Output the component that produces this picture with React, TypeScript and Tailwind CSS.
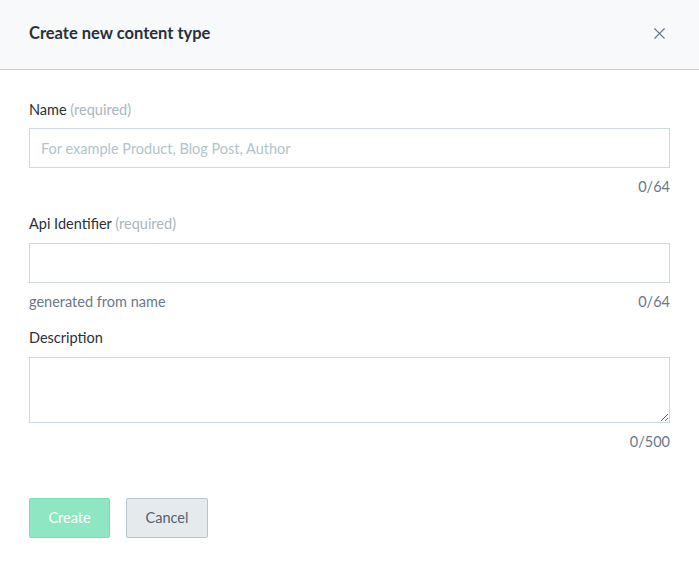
import { X } from "lucide-react"

const Counter = ({ text, left }: { text: string; left?: string }) => (
  <div className="flex justify-between text-[14.5px] text-[#6a7889] mt-[9px] leading-5">
    <span>{left}</span>
    <span>{text}</span>
  </div>
)

const App = () => {
  return (
    <div className="w-[699px] h-[568px] bg-white text-[#2a3039]" style={{ fontFamily: "Lato, 'Open Sans', sans-serif" }}>
      <div className="h-[70px] flex items-center justify-between pl-[29px] pr-[30px] pb-[2px] bg-[#f7f9fa] border-b border-[#c3cfd5]">
        <h1 className="text-[16.5px] font-bold text-[#2a3039]">Create new content type</h1>
        <X className="w-[19px] h-[19px] text-[#6a7889]" strokeWidth={1.4} />
      </div>
      <div className="px-[29px] pt-[30px] text-[14.5px]">
        <label className="block leading-5">
          Name <span className="text-[#a9b6c0]">(required)</span>
        </label>
        <input
          className="mt-[8px] w-full h-[40px] border border-[#cfd9de] px-[11px] text-[14.5px] outline-none placeholder:text-[#b4c3ca]"
          placeholder="For example Product, Blog Post, Author"
        />
        <Counter text="0/64" />

        <label className="block leading-5 mt-[17px]">
          Api Identifier <span className="text-[#a9b6c0]">(required)</span>
        </label>
        <input className="mt-[9px] w-full h-[40px] border border-[#cfd9de] px-[11px] outline-none" />
        <Counter text="0/64" left="generated from name" />

        <label className="block leading-5 mt-[16px]">Description</label>
        <textarea className="mt-[9px] block w-full h-[66px] border border-[#cfd9de] px-[11px] outline-none resize-y" />
        <Counter text="0/500" />

        <div className="flex gap-[16px] mt-[46px]">
          <button className="w-[81px] h-[40px] rounded-[2px] bg-[#8ee6c3] border border-[#7ddab5] text-white text-[14.5px]">
            Create
          </button>
          <button className="w-[82px] h-[40px] rounded-[2px] bg-[#e5ebed] border border-[#b9c5cc] text-[#536171] text-[14.5px]">
            Cancel
          </button>
        </div>
      </div>
    </div>
  )
}
export default App
